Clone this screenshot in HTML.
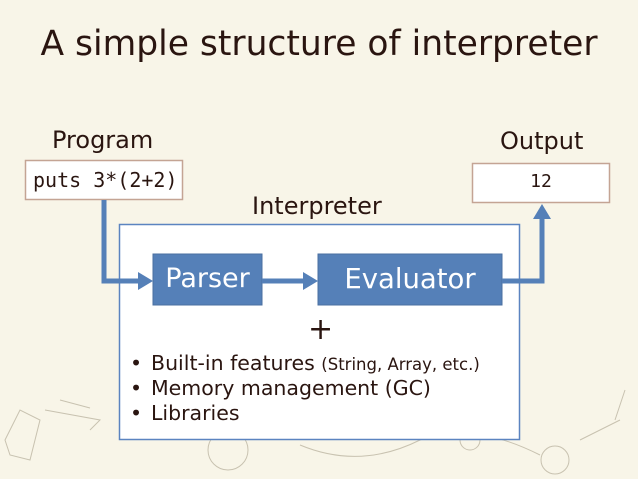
<!DOCTYPE html>
<html><head><style>
body{margin:0;width:638px;height:479px;background:#f8f5e8;position:relative;overflow:hidden;font-family:"DejaVu Sans","Liberation Sans",sans-serif;color:#2a1510}
.a{position:absolute;white-space:nowrap}
.b{position:absolute;left:130px;font-size:20.5px}
.t{position:absolute;left:151px;font-size:20.5px;white-space:nowrap}
</style></head><body>
<svg class="a" style="left:0;top:0" width="638" height="479">
<g fill="none" stroke="#c8c2b0" stroke-width="1">
<path d="M5 440 L20 410 L40 420 L30 460 L10 455Z M45 410 L100 420 L90 430 M60 400 l30 8"/>
<circle cx="228" cy="450" r="20"/><circle cx="555" cy="460" r="14"/><circle cx="470" cy="440" r="10"/>
<path d="M300 445 Q360 470 420 440 Q470 420 540 455 M580 440 l40 -20 M615 420 l10 -30"/>
</g>
<rect x="25.5" y="160.5" width="157" height="39" fill="#fff" stroke="#c4a494" stroke-width="1.5"/>
<rect x="472.5" y="163.5" width="137" height="39" fill="#fff" stroke="#c4a494" stroke-width="1.5"/>
<rect x="119.5" y="224.5" width="400" height="215" fill="#fff" stroke="#5b84c0" stroke-width="1.5"/>
<rect x="153" y="254" width="109" height="51" fill="#5580b8" stroke="#4a6fa0"/>
<rect x="318" y="254" width="184" height="51" fill="#5580b8" stroke="#4a6fa0"/>
<g stroke="#5580b8" stroke-width="5" fill="none">
<path d="M104 200 V281 H140"/><path d="M262 281 H305"/><path d="M502 281 H542 V217"/>
</g>
<g fill="#5580b8">
<path d="M138 272 L153 281 L138 290Z"/><path d="M303 272 L318 281 L303 290Z"/><path d="M533 219 L542 204 L551 219Z"/>
</g>
</svg>
<div class="a" style="left:0;width:638px;text-align:center;top:24px;font-size:34.5px">A simple structure of interpreter</div>
<div class="a" style="left:52px;top:126px;font-size:24px">Program</div>
<div class="a" style="left:500px;top:127px;font-size:24px">Output</div>
<div class="a" style="left:33px;top:168px;font-size:20px;font-family:'DejaVu Sans Mono','Liberation Mono',monospace">puts 3*(2+2)</div>
<div class="a" style="left:472px;width:138px;text-align:center;top:171px;font-size:18px;font-family:'DejaVu Sans Mono','Liberation Mono',monospace">12</div>
<div class="a" style="left:252px;top:192px;font-size:24px">Interpreter</div>
<div class="a" style="left:153px;width:109px;text-align:center;top:263px;font-size:27px;color:#fff">Parser</div>
<div class="a" style="left:318px;width:184px;text-align:center;top:263px;font-size:27.5px;color:#fff">Evaluator</div>
<div class="a" style="left:308px;top:312px;font-size:30px">+</div>
<div class="b" style="top:351px">•</div><div class="t" style="top:351px">Built-in features <span style="font-size:16.5px">(String, Array, etc.)</span></div>
<div class="b" style="top:376px">•</div><div class="t" style="top:376px">Memory management (GC)</div>
<div class="b" style="top:401px">•</div><div class="t" style="top:401px">Libraries</div>
</body></html>
